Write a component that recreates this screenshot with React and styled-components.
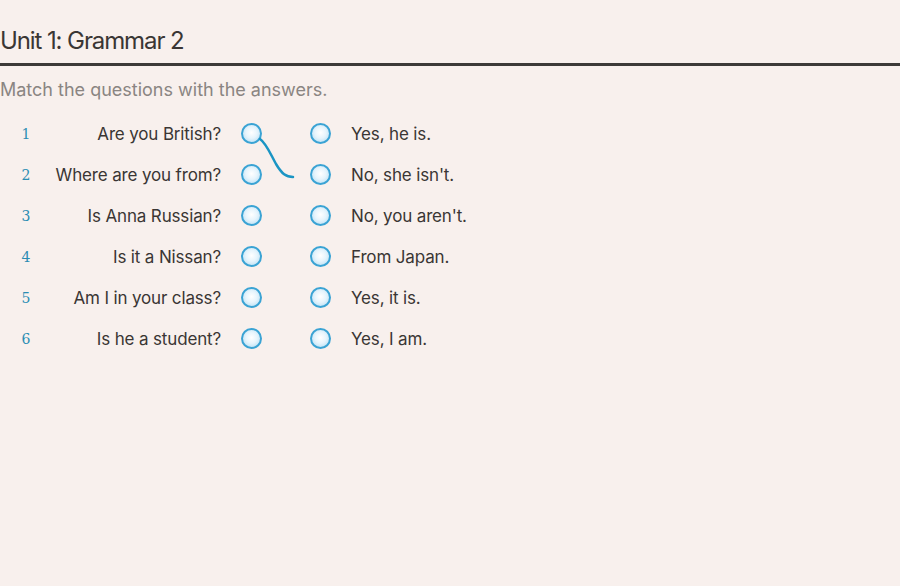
import React from "react";
import styled, { createGlobalStyle } from "styled-components";

const Global = createGlobalStyle`
  html, body { margin: 0; padding: 0; background: #f8f0ed; }
  body { font-family: Inter, "Liberation Sans", sans-serif; }
`;

const Page = styled.div`
  width: 900px;
  height: 586px;
  background: #f8f0ed;
  padding-top: 26px;
  box-sizing: border-box;
`;

const Title = styled.h1`
  margin: 0;
  padding: 0 0 7px 0;
  font-size: 24px;
  font-weight: 400;
  letter-spacing: -1.1px;
  color: #3a3634;
  border-bottom: 3px solid #3d3a38;
  line-height: 30px;
`;

const Instruction = styled.p`
  margin: 11px 0 0 0;
  font-size: 18px;
  line-height: 26px;
  color: #8a8582;
  letter-spacing: 0px;
`;

const Board = styled.div`
  position: relative;
  margin-top: 10px;
  display: grid;
  grid-template-columns: 52px 169px 20px 21px 48px 21px 20px 1fr;
  grid-auto-rows: 41px;
  align-items: center;
`;

const Num = styled.span`
  font-family: "DejaVu Serif", Georgia, serif;
  font-size: 14px;
  font-weight: 500;
  color: #2a8db3;
  text-align: center;
`;

const Question = styled.span`
  font-size: 17px;
  color: #3a3634;
  text-align: right;
  letter-spacing: -0.15px;
  white-space: nowrap;
`;

const Answer = styled.span`
  font-size: 17px;
  color: #3a3634;
  letter-spacing: -0.15px;
  white-space: nowrap;
`;

const Dot = styled.span`
  width: 21px;
  height: 21px;
  box-sizing: border-box;
  border-radius: 50%;
  border: 2px solid #3aa3d4;
  background: radial-gradient(circle at 50% 45%, #ffffff 0%, #e6f4fc 45%, #a9d8f1 100%);
  grid-column: ${(p) => p.$col};
`;

const Spacer = styled.span``;

const Link = styled.svg`
  position: absolute;
  left: 0;
  top: 0;
  pointer-events: none;
  overflow: visible;
`;

const rows = [
  ["Are you British?", "Yes, he is."],
  ["Where are you from?", "No, she isn't."],
  ["Is Anna Russian?", "No, you aren't."],
  ["Is it a Nissan?", "From Japan."],
  ["Am I in your class?", "Yes, it is."],
  ["Is he a student?", "Yes, I am."],
];

export default function App() {
  return (
    <Page>
      <Global />
      <Title>Unit 1: Grammar 2</Title>
      <Instruction>Match the questions with the answers.</Instruction>
      <Board>
        {rows.map(([q, a], i) => (
          <React.Fragment key={i}>
            <Num>{i + 1}</Num>
            <Question>{q}</Question>
            <Spacer />
            <Dot $col={4} />
            <Spacer />
            <Dot $col={6} />
            <Spacer />
            <Answer>{a}</Answer>
          </React.Fragment>
        ))}
        <Link width="900" height="100">
          <path
            d="M260 26 C 266 30, 270 40, 276 51 C 282 61, 286 64, 293 64"
            fill="none"
            stroke="#1b95c4"
            strokeWidth="2.5"
            strokeLinecap="round"
          />
        </Link>
      </Board>
    </Page>
  );
}
